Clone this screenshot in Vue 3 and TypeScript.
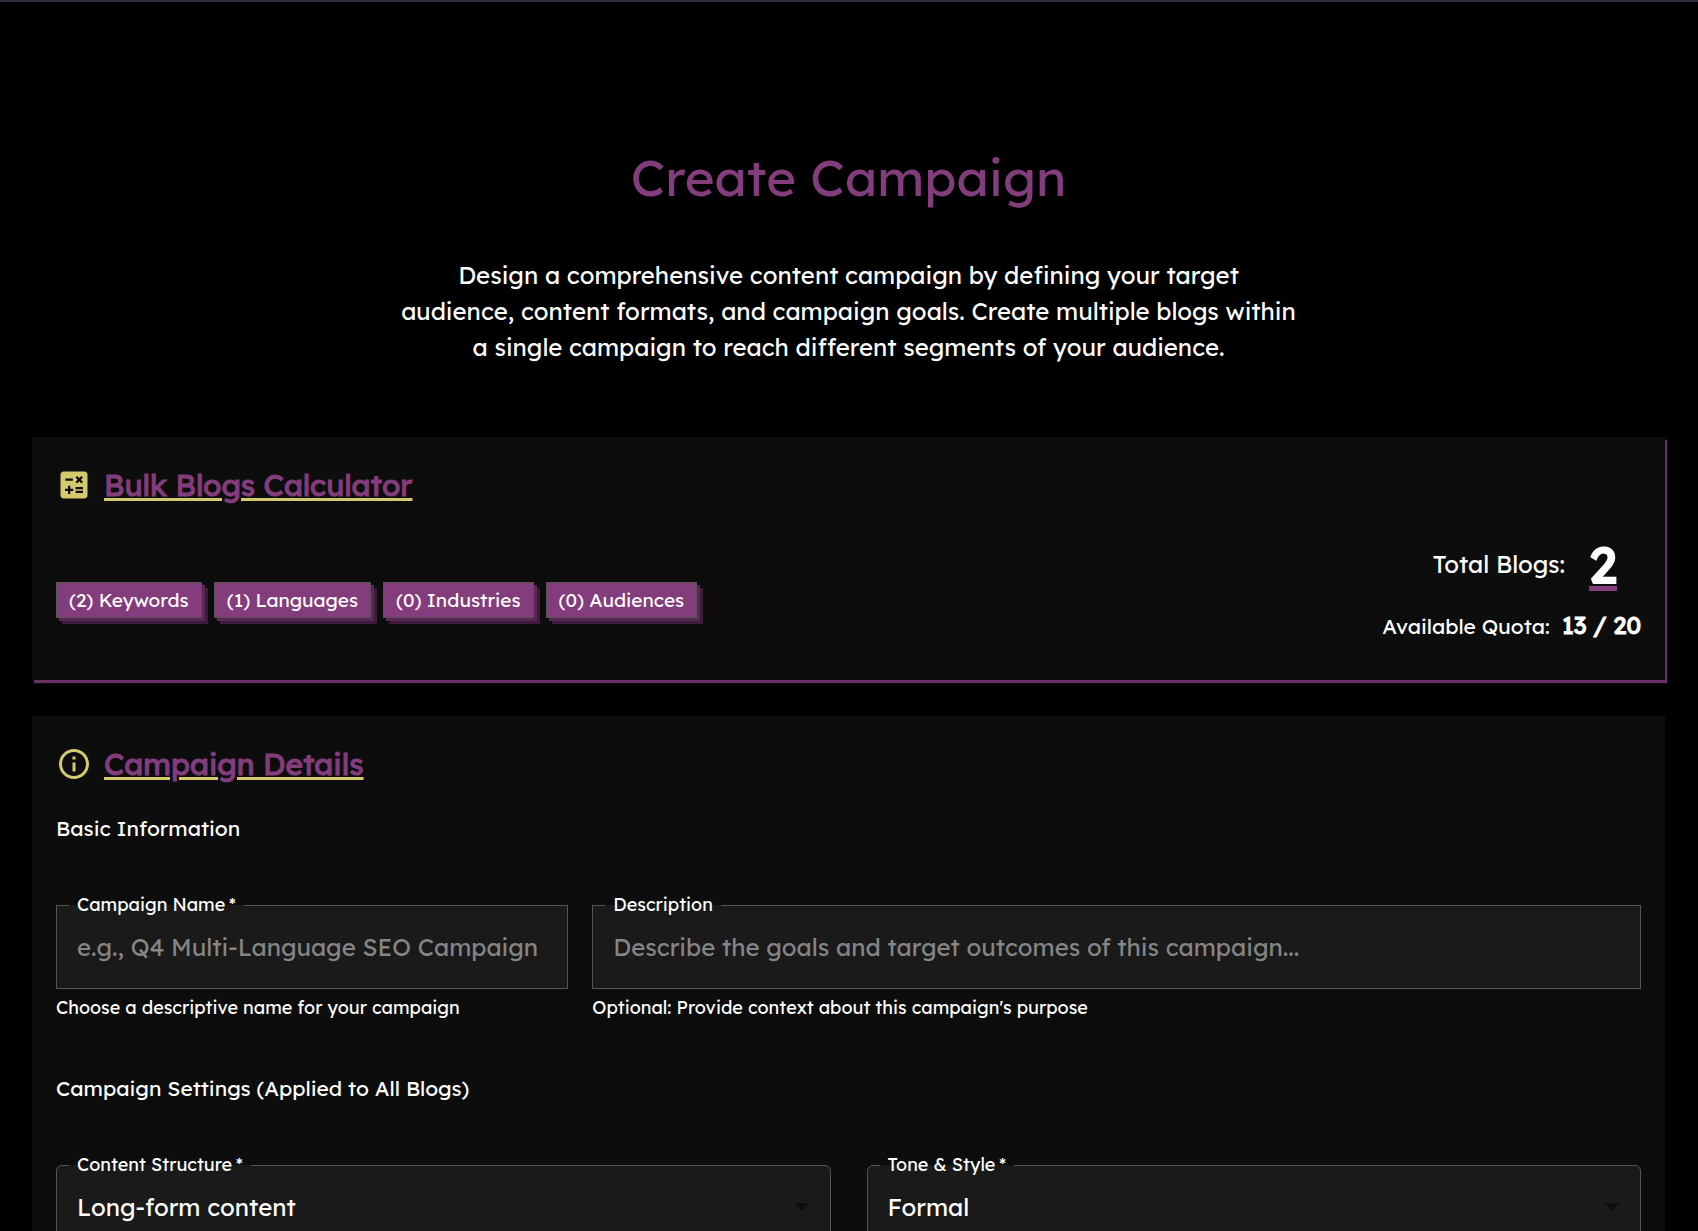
<script setup lang="ts">
interface Counter {
  count: number
  label: string
}

const counters: Counter[] = [
  { count: 2, label: 'Keywords' },
  { count: 1, label: 'Languages' },
  { count: 0, label: 'Industries' },
  { count: 0, label: 'Audiences' },
]
</script>

<template>
  <main class="page">
    <header class="hero">
      <h1 class="hero-title">Create Campaign</h1>
      <p class="hero-text">
        Design a comprehensive content campaign by defining your target<br />
        audience, content formats, and campaign goals. Create multiple blogs within<br />
        a single campaign to reach different segments of your audience.
      </p>
    </header>

    <section class="card card-raised">
      <div class="card-head">
        <svg class="card-icon" viewBox="0 0 24 24" aria-hidden="true">
          <path
            d="M19 3H5c-1.100 0-2 .9-2 2v14c0 1.100.9 2 2 2h14c1.100 0 2-.9 2-2V5c0-1.100-.9-2-2-2zm-5.970 4.060L14.090 6l1.410 1.410L16.910 6l1.060 1.060-1.410 1.410 1.410 1.410-1.060 1.060-1.410-1.400-1.410 1.410-1.060-1.060 1.410-1.410-1.410-1.420zm-6.780.66h5v1.500h-5v-1.500zM11.500 16h-2v2H8v-2H6v-1.500h2v-2h1.500v2h2V16zm6.500 1.250h-5v-1.500h5v1.500zm0-2.500h-5v-1.500h5v1.500z"
          />
        </svg>
        <h2 class="card-title">Bulk Blogs Calculator</h2>
      </div>
      <div class="summary">
        <ul class="chips">
          <li v-for="c in counters" :key="c.label" class="chip">({{ c.count }}) {{ c.label }}</li>
        </ul>
        <div class="totals">
          <p class="total">
            <span>Total Blogs:</span>
            <strong class="total-value">2</strong>
          </p>
          <p class="quota">
            <span>Available Quota:</span>
            <strong class="quota-value">13 / 20</strong>
          </p>
        </div>
      </div>
    </section>

    <section class="card">
      <div class="card-head">
        <svg class="card-icon" viewBox="0 0 24 24" aria-hidden="true">
          <path
            d="M11 7h2v2h-2zm0 4h2v6h-2zm1-9C6.480 2 2 6.480 2 12s4.480 10 10 10 10-4.480 10-10S17.520 2 12 2zm0 18c-4.410 0-8-3.590-8-8s3.590-8 8-8 8 3.590 8 8-3.590 8-8 8z"
          />
        </svg>
        <h2 class="card-title">Campaign Details</h2>
      </div>

      <h3 class="group-title">Basic Information</h3>
      <div class="row row-basic">
        <div>
          <fieldset class="field">
            <legend class="legend"><label for="name">Campaign Name&thinsp;*</label></legend>
            <input id="name" class="control" type="text" placeholder="e.g., Q4 Multi-Language SEO Campaign" />
          </fieldset>
          <p class="helper">Choose a descriptive name for your campaign</p>
        </div>
        <div>
          <fieldset class="field">
            <legend class="legend"><label for="description">Description</label></legend>
            <input
              id="description"
              class="control"
              type="text"
              placeholder="Describe the goals and target outcomes of this campaign..."
            />
          </fieldset>
          <p class="helper">Optional: Provide context about this campaign's purpose</p>
        </div>
      </div>

      <h3 class="group-title">Campaign Settings (Applied to All Blogs)</h3>
      <div class="row row-settings">
        <fieldset class="field field-select">
          <legend class="legend"><label for="structure">Content Structure&thinsp;*</label></legend>
          <select id="structure" class="control">
            <option>Long-form content</option>
          </select>
          <svg class="arrow" viewBox="0 0 24 24" aria-hidden="true"><path d="M7 10l5 5 5-5z" /></svg>
        </fieldset>
        <fieldset class="field field-select">
          <legend class="legend"><label for="tone">Tone &amp; Style&thinsp;*</label></legend>
          <select id="tone" class="control">
            <option>Formal</option>
          </select>
          <svg class="arrow" viewBox="0 0 24 24" aria-hidden="true"><path d="M7 10l5 5 5-5z" /></svg>
        </fieldset>
      </div>
    </section>
  </main>
</template>

<style>
html {
  background: #000;
  scrollbar-width: none;
}
</style>

<style scoped>
.page {
  box-sizing: border-box;
  min-height: 100vh;
  padding: 142px 33px 0 32px;
  border-top: 2px solid #30303a;
  background: #000;
  color: #fff;
  font-family: Lexend, Inter, "Noto Sans", sans-serif;
}
h1,
h2,
h3,
p,
ul {
  margin: 0;
  padding: 0;
  font-weight: 400;
}
.hero {
  text-align: center;
}
.hero-title {
  font-size: 51px;
  line-height: 66px;
  color: #833c7c;
}
.hero-text {
  margin-top: 47px;
  font-size: 24px;
  line-height: 36px;
}
.card {
  margin-top: 36px;
  padding: 24px;
  background: #0d0d0d;
}
.card-raised {
  box-sizing: border-box;
  min-height: 243px;
  margin-top: 72px;
  box-shadow: 2px 3px 1px 0 #692f64;
}
.card-head {
  display: flex;
  align-items: center;
  gap: 12px;
  height: 48px;
}
.card-icon {
  width: 36px;
  height: 36px;
  fill: #d4c96c;
}
.card-title {
  font-size: 30px;
  line-height: 48px;
  color: #833c7c;
  -webkit-text-stroke: 1px #833c7c;
  text-decoration: underline 3px #d4c96c;
  text-underline-offset: 2px;
}
.summary {
  display: flex;
  align-items: center;
  justify-content: space-between;
  margin-top: 24px;
}
.chips {
  display: flex;
  gap: 12px;
  margin-top: 22px;
  list-style: none;
}
.chip {
  box-sizing: border-box;
  height: 36px;
  padding: 0 12px;
  border: 1px solid #555;
  background: #833c7c;
  box-shadow: 3px 3px #5b2757, 6px 6px #3d1c3b;
  font-size: 19px;
  line-height: 34px;
}
.totals {
  display: flex;
  flex-direction: column;
  align-items: flex-end;
  gap: 12px;
}
.total {
  display: flex;
  align-items: center;
  gap: 24px;
  padding-right: 24px;
  font-size: 24px;
  line-height: 62px;
}
.total-value {
  font-size: 51px;
  font-weight: 400;
  -webkit-text-stroke: 2px #fff;
  text-decoration: underline 5px #833c7c;
  text-underline-offset: 3px;
}
.quota {
  display: flex;
  align-items: baseline;
  gap: 12px;
  font-size: 21px;
  line-height: 36px;
}
.quota-value {
  font-size: 24px;
  font-weight: 400;
  -webkit-text-stroke: 1px #fff;
}
.group-title {
  margin-top: 24px;
  font-size: 21px;
  line-height: 33px;
}
.row {
  display: grid;
  margin-top: 48px;
}
.row + .group-title {
  margin-top: 50px;
}
.row-basic {
  grid-template-columns: repeat(12, 1fr);
  gap: 24px;
}
.row-basic > :first-child {
  grid-column: span 4;
}
.row-basic > :last-child {
  grid-column: span 8;
}
.row-settings {
  grid-template-columns: 1fr 1fr;
  gap: 36px;
}
.field {
  position: relative;
  min-width: 0;
  margin: 0;
  padding: 0;
  border: 1px solid #555;
  background: #1a1a1a;
}
.field-select {
  border-radius: 6px;
}
.legend {
  margin-left: 12px;
  padding: 0 8px;
  font-size: 18px;
  line-height: 24px;
}
.control {
  display: block;
  box-sizing: border-box;
  width: 100%;
  height: 71px;
  padding: 0 20px 12px;
  border: 0;
  outline: 0;
  background: transparent;
  appearance: none;
  color: #fff;
  font-family: inherit;
  font-size: 24px;
}
.control::placeholder {
  color: #858585;
  opacity: 1;
}
.arrow {
  position: absolute;
  right: 10px;
  bottom: 24px;
  width: 36px;
  height: 36px;
  fill: #0d0d0d;
  pointer-events: none;
}
.helper {
  margin-top: 5px;
  font-size: 18px;
  line-height: 28px;
}
</style>
